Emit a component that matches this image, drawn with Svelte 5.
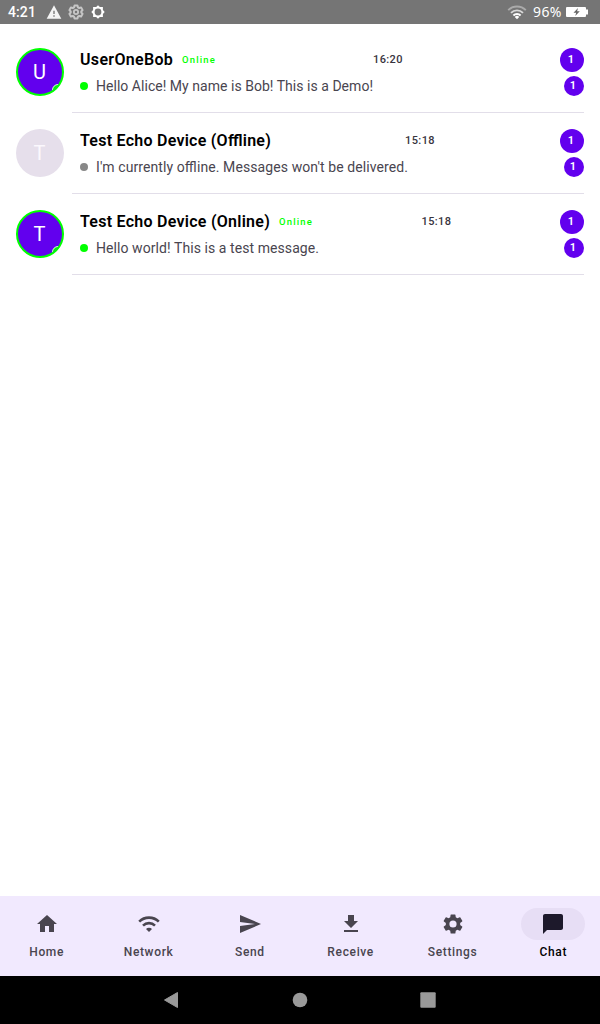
<script>
  const chats = [
    { name: 'UserOneBob', initial: 'U', online: true, time: '16:20', text: 'Hello Alice! My name is Bob! This is a Demo!', nameWidth: 94, textWidth: 277 },
    { name: 'Test Echo Device (Offline)', initial: 'T', online: false, time: '15:18', text: "I'm currently offline. Messages won't be delivered.", nameWidth: 192, textWidth: 312 },
    { name: 'Test Echo Device (Online)', initial: 'T', online: true, time: '15:18', text: 'Hello world! This is a test message.', nameWidth: 191, textWidth: 223 }
  ];
  const gear = 'M19.14 12.94c.04-.3.06-.61.06-.94s-.02-.64-.07-.94l2.03-1.58a.49.49 0 0 0 .12-.61l-1.92-3.32a.49.49 0 0 0-.59-.22l-2.39.96a7 7 0 0 0-1.62-.94l-.36-2.54a.48.48 0 0 0-.48-.41h-3.84a.47.47 0 0 0-.47.41l-.36 2.54c-.59.24-1.13.57-1.62.94l-2.39-.96a.48.48 0 0 0-.59.22L2.74 8.87a.47.47 0 0 0 .12.61l2.03 1.58c-.05.3-.09.63-.09.94s.02.64.07.94l-2.03 1.58a.49.49 0 0 0-.12.61l1.92 3.32c.12.22.37.29.59.22l2.39-.96c.5.38 1.03.7 1.62.94l.36 2.54c.05.24.24.41.48.41h3.84c.24 0 .44-.17.47-.41l.36-2.54a7 7 0 0 0 1.62-.94l2.39.96c.22.08.47 0 .59-.22l1.92-3.32a.47.47 0 0 0-.12-.61zM12 15.6A3.6 3.6 0 1 1 12 8.4a3.6 3.6 0 0 1 0 7.2z';
  const tabs = [
    { label: 'Home', path: 'M10 20v-6h4v6h5v-8h3L12 3 2 12h3v8z' },
    { label: 'Network', wifi: true },
    { label: 'Send', path: 'M2.01 21 23 12 2.01 3 2 10l15 2-15 2z' },
    { label: 'Receive', path: 'M19 9h-4V3H9v6H5l7 7zM5 18v2h14v-2z' },
    { label: 'Settings', path: gear },
    { label: 'Chat', active: true, path: 'M20 2H4c-1.1 0-1.99.9-1.99 2L2 22l4-4h14c1.1 0 2-.9 2-2V4c0-1.1-.9-2-2-2z' }
  ];
</script>

<div class="screen">
  <header>
    <span class="clock">4:21</span>
    <svg class="warn" width="16" height="16" viewBox="0 0 24 24"><path fill="#f4f4f4" d="M1 22h22L12 2zm12-3h-2v-2h2zm0-4h-2v-5h2z" /></svg>
    <svg class="faded" width="16" height="16" viewBox="0 0 24 24"><path fill="none" stroke="#c6c6c6" stroke-width="3" stroke-linejoin="round" d="M9.8 2.2h4.4l.8 2.9 1.8 1 2.9-.8 2.2 3.9-2 2.1v1.4l2 2.1-2.2 3.9-2.9-.8-1.8 1-.8 2.9H9.8L9 18.9l-1.8-1-2.9.8-2.2-3.9 2-2.1v-1.4l-2-2.1 2.2-3.9 2.9.8 1.8-1z" /><circle cx="12" cy="12" r="3.2" fill="none" stroke="#c6c6c6" stroke-width="2.8" /></svg>
    <svg class="cog" width="14" height="14" viewBox="0 0 24 24"><path fill="#fff" fill-rule="evenodd" d="m12 .5 3.2 2.8h5.2v5.3L23.5 12l-3.1 3.4v5.3h-5.2L12 23.5l-3.2-2.8H3.6v-5.3L.5 12l3.1-3.4V3.3h5.2zm0 5.7a5.8 5.8 0 1 0 0 11.6 5.8 5.8 0 0 0 0-11.6z" /></svg>
    <span class="fill"></span>
    <svg class="signal" width="20" height="16" viewBox="0 0 20 16"><path fill="none" stroke="#aaa" stroke-width="1.9" d="M1.2 6.1a12.5 12.5 0 0 1 17.6 0" /><path fill="none" stroke="#d8d8d8" stroke-width="1.9" d="M4 8.9a8.5 8.5 0 0 1 12 0" /><path fill="none" stroke="#fff" stroke-width="1.9" d="M6.4 11.5a5 5 0 0 1 7.2 0" /><path fill="#fff" d="m10 15.2-2.2-2.3a3 3 0 0 1 4.4 0z" /></svg>
    <span class="percent">96%</span>
    <svg class="battery" width="22" height="10" viewBox="0 0 22 10"><path fill="#fff" d="M1 0h18a1 1 0 0 1 1 1v1.5h2v5h-2V9a1 1 0 0 1-1 1H1a1 1 0 0 1-1-1V1a1 1 0 0 1 1-1z" /><path fill="#666" d="M12 1 7.5 5.7h2.7L9.2 9l4.6-4.7h-2.7z" /></svg>
  </header>

  <main>
    {#each chats as chat}
      <article>
        <div class="avatar" class:online={chat.online}>
          <span>{chat.initial}</span>
          {#if chat.online}<i></i>{/if}
        </div>
        <div class="body">
          <div class="top">
            <div class="title">
              <svg width={chat.nameWidth} height="24"><text x="0" y="17" textLength={chat.nameWidth - 1.2}>{chat.name}</text></svg>
              <small>{chat.online ? 'Online' : ''}</small>
            </div>
            <time>{chat.time}</time>
            <b class="badge">1</b>
          </div>
          <div class="bottom">
            <i class="dot" class:on={chat.online}></i>
            <svg class="msg" width={chat.textWidth} height="20"><text x="0" y="15" textLength={chat.textWidth}>{chat.text}</text></svg>
            <b class="badge small">1</b>
          </div>
        </div>
      </article>
    {/each}
  </main>

  <nav>
    {#each tabs as tab}
      <div class="tab" class:active={tab.active}>
        <div class="pill">
          <svg width="24" height="24" viewBox="0 0 24 24">
            {#if tab.wifi}
              <g fill="none" stroke="currentColor" stroke-width="2.6"><path d="M2.2 9.7a13.9 13.9 0 0 1 19.6 0M6 13.6a8.5 8.5 0 0 1 12 0" /></g>
              <path fill="currentColor" d="M9 17a4.2 4.2 0 0 1 6 0l-3 3.1z" />
            {:else}
              <path fill="currentColor" d={tab.path} />
            {/if}
          </svg>
        </div>
        <span>{tab.label}</span>
      </div>
    {/each}
  </nav>

  <footer>
    <svg width="16" height="18" viewBox="0 0 16 18"><path fill="#999" d="M14.5 1.5v15L1.5 9z" stroke="#999" stroke-linejoin="round" /></svg>
    <svg width="16" height="16" viewBox="0 0 16 16"><circle cx="8" cy="8" r="7.3" fill="#999" /></svg>
    <svg width="16" height="16" viewBox="0 0 16 16"><rect x=".3" y=".3" width="15.4" height="15.4" rx="1" fill="#999" /></svg>
  </footer>
</div>

<style>
  :global(body) { margin: 0; background: #fff; }
  .screen { width: 600px; height: 1024px; display: flex; flex-direction: column; font-family: Roboto, sans-serif; background: #fff; overflow: hidden; }
  svg { display: block; flex: none; }
  header { height: 24px; flex: none; box-sizing: border-box; padding: 0 12px 0 8px; background: #757575; color: #fff; display: flex; align-items: center; }
  .clock { width: 38px; font-size: 14px; font-weight: 500; letter-spacing: .1px; }
  .faded { margin-left: 6px; }
  .cog { margin-left: 7px; }
  .fill { flex: 1; }
  .percent { width: 33px; height: 20px; margin-left: 6px; font: 14px/20px "Noto Sans", sans-serif; letter-spacing: .4px; }
  main { flex: 1; padding-top: 8px; }
  article { height: 81px; display: flex; box-sizing: border-box; padding: 16px 16px 0; gap: 16px; }
  .avatar { position: relative; width: 48px; height: 48px; flex: none; box-sizing: border-box; border-radius: 50%; overflow: hidden; display: flex; align-items: center; justify-content: center; background: #e6dfeb; color: #fbf8fd; font-size: 20px; }
  .avatar.online { border: 2px solid #0f0; background: #6200ee; color: #fff; }
  .avatar span { margin-right: 1px; }
  .avatar i { position: absolute; right: -2px; bottom: -2px; width: 10px; height: 10px; border: 1px solid #dcffdc; border-radius: 50%; background: #0f0; }
  .body { position: relative; flex: 1; }
  .body::after { content: ''; position: absolute; left: -8px; right: 0; bottom: 0; height: 1px; background: #e2dee9; }
  .top { height: 24px; display: flex; align-items: center; justify-content: space-between; }
  .title { display: flex; align-items: center; gap: 8px; }
  .title text { font-size: 16px; font-weight: 600; fill: #000; }
  small { padding-bottom: 2px; color: #0f0; font-size: 9.5px; font-weight: 500; letter-spacing: 1.15px; }
  time { padding-bottom: 2px; color: #38343e; font-size: 11px; font-weight: 500; letter-spacing: .4px; }
  .bottom { height: 28px; display: flex; align-items: center; }
  .msg text { font-size: 14px; fill: #49454f; }
  .dot { width: 8px; height: 8px; border-radius: 50%; margin-right: 8px; background: #888; }
  .dot.on { background: #0f0; }
  .badge { width: 24px; height: 24px; box-sizing: border-box; padding: 0 2px 1px 0; border-radius: 50%; background: #6200ee; color: #fff; font-size: 11px; font-weight: 600; display: flex; align-items: center; justify-content: center; }
  .small { width: 20px; height: 20px; margin-left: auto; }
  nav { height: 80px; flex: none; display: grid; grid-template-columns: repeat(6, 1fr); gap: 8px; background: #f1e9fe; color: #49454f; }
  .tab { padding: 12px 0 0 1.2px; display: flex; flex-direction: column; align-items: center; gap: 4px; font-size: 12px; font-weight: 470; line-height: 16px; letter-spacing: .65px; }
  .tab:first-child, .tab:nth-child(4), .tab.active { padding-left: 0; }
  .pill { width: 64px; height: 32px; border-radius: 16px; display: flex; align-items: center; justify-content: center; }
  .active { color: #1d192b; }
  .active .pill { background: #e7def5; }
  .active span { color: #000; font-weight: 500; }
  footer { height: 48px; flex: none; box-sizing: border-box; padding-left: 163px; background: #000; display: flex; align-items: center; gap: 113px; }
  footer svg:last-child { margin-left: -1px; }
</style>
